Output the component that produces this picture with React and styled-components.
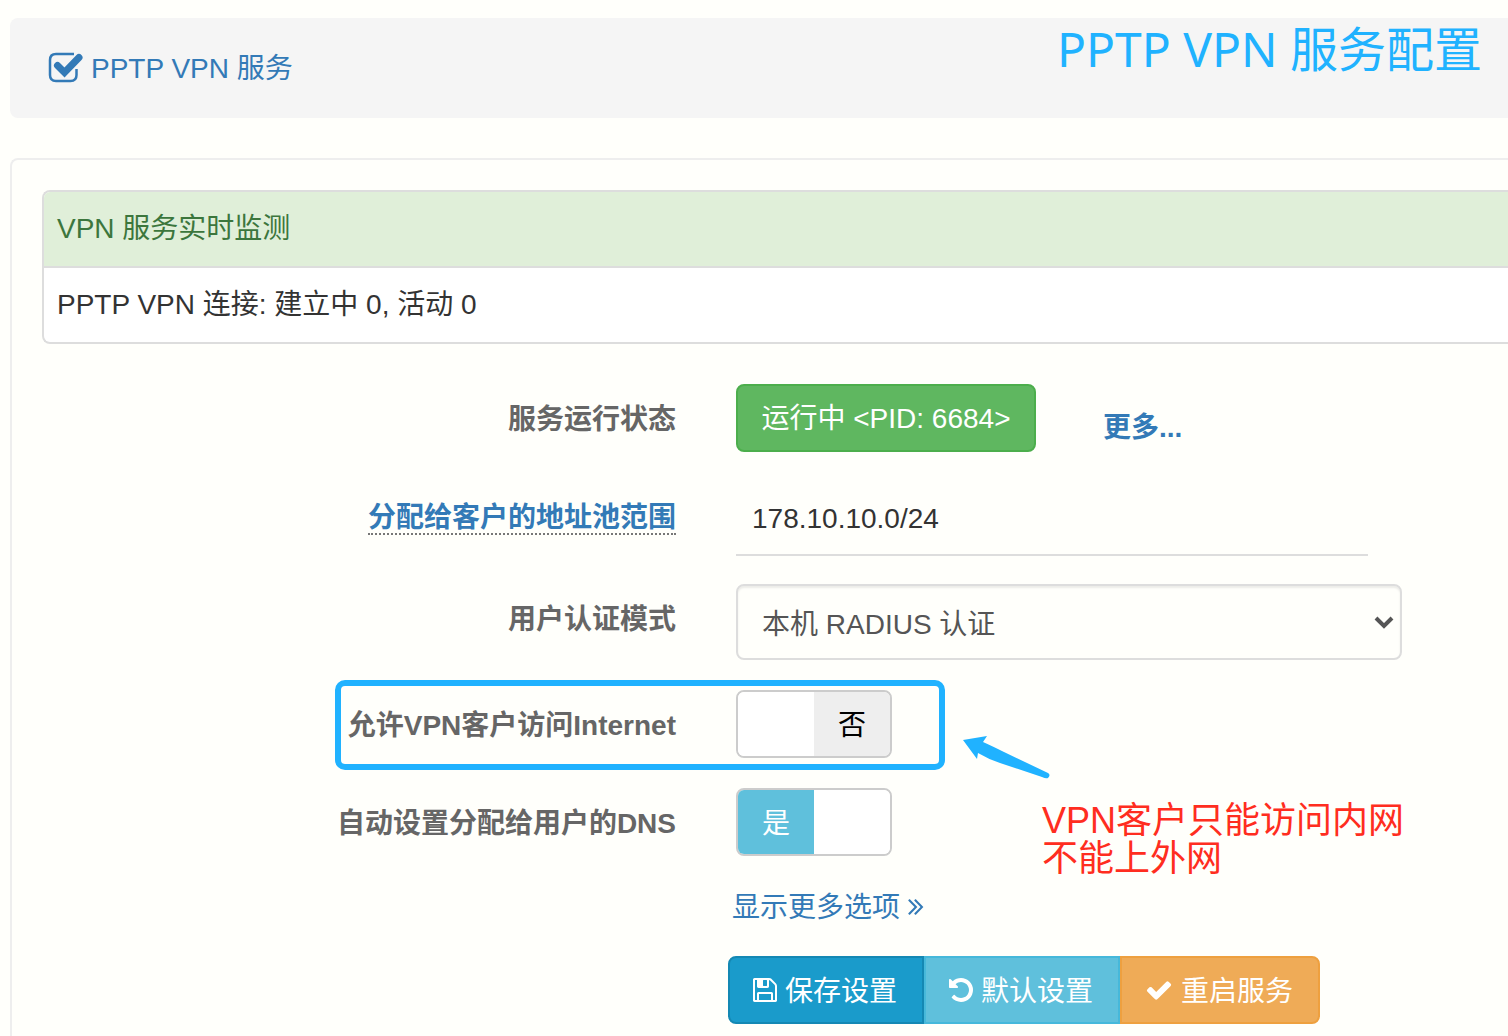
import React, { useState } from "react";
import styled, { createGlobalStyle } from "styled-components";

// Icons //
function CheckBoxIcon() {
  return (
    <svg width="36" height="32" viewBox="0 0 36 32" aria-hidden="true">
      <path
        d="M26 2H8Q2 2 2 8v15q0 6 6 6h14.500q6 0 6-6v-6"
        fill="none"
        stroke="currentColor"
        strokeWidth="2.500"
      />
      <path
        d="M9.500 13.500l7 7 14.500-15"
        fill="none"
        stroke="currentColor"
        strokeWidth="7"
        strokeLinecap="round"
      />
    </svg>
  );
}

function Icon({ path, size = 28 }) {
  return (
    <svg width={size} height={size} viewBox="0 0 1792 1792" aria-hidden="true">
      <path d={path} fill="currentColor" />
    </svg>
  );
}

const savePath =
  "M512 1536h768v-384h-768v384zm896 0h128v-896q0-14-10-38.5t-20-34.5l-281-281q-10-10-34-20t-39-10v416q0 40-28 68t-68 28h-576q-40 0-68-28t-28-68v-416h-128v1280h128v-416q0-40 28-68t68-28h832q40 0 68 28t28 68v416zm-384-928v-320q0-13-9.5-22.5t-22.5-9.5h-192q-13 0-22.5 9.5t-9.5 22.5v320q0 13 9.5 22.5t22.5 9.5h192q13 0 22.5-9.5t9.5-22.5zm640 32v928q0 40-28 68t-68 28h-1344q-40 0-68-28t-28-68v-1344q0-40 28-68t68-28h928q40 0 88 20t76 48l280 280q28 28 48 76t20 88z";
const undoPath =
  "M1664 896q0 156-61 298t-164 245-245 164-298 61q-172 0-327-72.5t-264-204.5q-7-10-6.5-22.5t8.5-20.5l137-138q10-9 25-9 16 2 23 12 73 95 179 147t225 52q104 0 198.5-40.5t163.5-109.5 109.5-163.5 40.5-198.5-40.5-198.5-109.5-163.5-163.5-109.5-198.5-40.5q-98 0-188 35.5t-160 101.5l137 138q31 30 14 69-17 40-59 40h-448q-26 0-45-19t-19-45v-448q0-42 40-59 39-17 69 14l130 129q107-101 244.5-156.5t284.5-55.5q156 0 298 61t245 164 164 245 61 298z";
const checkPath =
  "M1671 566q0 40-28 68l-724 724-136 136q-28 28-68 28t-68-28l-136-136-362-362q-28-28-28-68t28-68l136-136q28-28 68-28t68 28l294 295 656-657q28-28 68-28t68 28l136 136q28 28 28 68z";
const morePath =
  "M979 960q0 13-10 23l-466 466q-10 10-23 10t-23-10l-50-50q-10-10-10-23t10-23l393-393-393-393q-10-10-10-23t10-23l50-50q10-10 23-10t23 10l466 466q10 10 10 23zm384 0q0 13-10 23l-466 466q-10 10-23 10t-23-10l-50-50q-10-10-10-23t10-23l393-393-393-393q-10-10-10-23t10-23l50-50q10-10 23-10t23 10l466 466q10 10 10 23z";
///////////

function YesNo({ id, checked, onChange }) {
  return (
    <Switch>
      <SwitchInput
        type="checkbox"
        id={id}
        checked={checked}
        onChange={(e) => onChange(e.target.checked)}
      />
      <SwitchHalf $color="#fff" $bg={checked ? "#5fc0dc" : "#fff"}>
        {checked ? "是" : ""}
      </SwitchHalf>
      <SwitchHalf $color="#000" $bg={checked ? "#fff" : "#eee"}>
        {checked ? "" : "否"}
      </SwitchHalf>
    </Switch>
  );
}

export default function App() {
  const [pool, setPool] = useState("178.10.10.0/24");
  const [mode, setMode] = useState("radius");
  const [internet, setInternet] = useState(false);
  const [dns, setDns] = useState(true);

  return (
    <>
      <GlobalStyle />
      <Page>
        <Header>
          <TitleLink href="#vpn">
            <CheckBoxIcon />
            <TitleText>PPTP VPN 服务</TitleText>
          </TitleLink>
          <Heading>PPTP VPN 服务配置</Heading>
        </Header>

        <Content>
          <Monitor>
            <MonitorTitle>VPN 服务实时监测</MonitorTitle>
            <MonitorBody>PPTP VPN 连接: 建立中 0, 活动 0</MonitorBody>
          </Monitor>

          <Form onSubmit={(e) => e.preventDefault()}>
            <Row>
              <Label as="span">服务运行状态</Label>
              <Status type="button">运行中 &lt;PID: 6684&gt;</Status>
              <MoreLink href="#more">更多...</MoreLink>
            </Row>

            <Row $top={32}>
              <Label htmlFor="pool" $pad={14}>
                <Hint>分配给客户的地址池范围</Hint>
              </Label>
              <PoolInput id="pool" value={pool} onChange={(e) => setPool(e.target.value)} />
            </Row>

            <Row $top={28}>
              <Label htmlFor="mode">用户认证模式</Label>
              <SelectBox>
                <Select id="mode" value={mode} onChange={(e) => setMode(e.target.value)}>
                  <option value="radius">本机 RADIUS 认证</option>
                </Select>
                <Chevron width="20" height="14" viewBox="0 0 20 14" aria-hidden="true">
                  <path d="M2 2l8 8 8-8" fill="none" stroke="#555" strokeWidth="4" />
                </Chevron>
              </SelectBox>
            </Row>

            <Row $top={30}>
              <Highlight />
              <Label htmlFor="internet">允许VPN客户访问Internet</Label>
              <YesNo id="internet" checked={internet} onChange={setInternet} />
              <Note>
                <Arrow width="90" height="44" viewBox="0 0 90 44" aria-hidden="true">
                  <path
                    d="M1 4L25 0L21 6Q30 10 42 16L86 37Q89 39 86 42Q84 43 80 41L38 27Q26 23 16 17L15 23Z"
                    fill="#20b2ff"
                  />
                </Arrow>
                <NoteText>
                  <NoteLine>VPN客户只能访问内网</NoteLine>
                  <NoteLine>不能上外网</NoteLine>
                </NoteText>
              </Note>
            </Row>

            <Row $top={30}>
              <Label htmlFor="dns">自动设置分配给用户的DNS</Label>
              <YesNo id="dns" checked={dns} onChange={setDns} />
            </Row>

            <OptionsLink href="#options">
              显示更多选项
              <Icon path={morePath} />
            </OptionsLink>

            <Buttons>
              <Button type="submit" $bg="#1a9bcb" $border="#1488b3">
                <Icon path={savePath} />
                <ButtonText>保存设置</ButtonText>
              </Button>
              <Button type="button" $bg="#5fc0dc" $border="#46b8da">
                <Icon path={undoPath} />
                <ButtonText>默认设置</ButtonText>
              </Button>
              <Button type="button" $bg="#efab57" $border="#eea03f">
                <Icon path={checkPath} />
                <ButtonText>重启服务</ButtonText>
              </Button>
            </Buttons>
          </Form>
        </Content>
      </Page>
    </>
  );
}

const GlobalStyle = createGlobalStyle`
  * {
    box-sizing: border-box;
  }
  body {
    margin: 0;
    background: #fffffb;
    color: #333;
    overflow-x: hidden;
  }
  body, button, input, select {
    font-family: "Liberation Sans", "Noto Sans CJK SC", sans-serif;
    font-size: 28px;
    line-height: 40px;
  }
  svg {
    flex: none;
  }
`;

// Wrappers //
const Page = styled.main`
  padding: 18px 0 0 10px;
  min-height: 100vh;
  display: flex;
  flex-direction: column;
  gap: 40px;
`;
const Header = styled.header`
  display: flex;
  justify-content: space-between;
  align-items: flex-start;
  height: 100px;
  padding: 0 26px 0 38px;
  border-radius: 8px 0 0 8px;
  background: #f5f5f5;
`;
const Content = styled.section`
  flex: 1;
  padding: 30px 0 12px 30px;
  border: 2px solid #eee;
  border-right: 0;
  border-bottom: 0;
  border-radius: 8px 0 0 0;
`;
const Monitor = styled.section`
  border: 2px solid #ddd;
  border-right: 0;
  border-radius: 8px 0 0 8px;
  background: #fff;
  overflow: hidden;
`;
const Form = styled.form`
  padding-top: 40px;
`;
const Row = styled.div`
  position: relative;
  display: flex;
  align-items: flex-start;
  margin-top: ${(props) => props.$top || 0}px;
`;
const Buttons = styled.div`
  display: flex;
  margin: 28px 0 0 686px;
`;
//////////////

// Content //
const TitleLink = styled.a`
  display: flex;
  align-items: center;
  gap: 7px;
  height: 100px;
  color: #337ab7;
  text-decoration: none;
`;
const TitleText = styled.span`
  padding-top: 2px;
`;
const Heading = styled.h1`
  margin: 0;
  font-family: "Noto Sans", "Noto Sans CJK SC", sans-serif;
  font-size: 48px;
  font-weight: 400;
  line-height: 62px;
  color: #20b2ff;
`;
const MonitorTitle = styled.h2`
  margin: 0;
  padding: 17px 13px;
  border-bottom: 2px solid #ddd;
  background: #e0efd9;
  font-size: 28px;
  font-weight: 400;
  color: #3c763d;
`;
const MonitorBody = styled.p`
  margin: 0;
  padding: 17px 13px;
`;
const Label = styled.label`
  width: 634px;
  margin-right: 60px;
  padding-top: ${(props) => props.$pad || 16}px;
  flex: none;
  text-align: right;
  font-weight: 700;
  color: #666;
`;
const Hint = styled.span`
  border-bottom: 2px dotted #777;
  color: #337ab7;
`;
const MoreLink = styled.a`
  margin: 24px 0 0 67px;
  font-weight: 700;
  color: #337ab7;
  text-decoration: none;
`;
const OptionsLink = styled.a`
  display: inline-flex;
  align-items: center;
  margin: 32px 0 0 690px;
  color: #337ab7;
  text-decoration: none;

  svg {
    margin: 0 0 4px 2px;
  }
`;
/////////////

// Controls //
const Status = styled.button`
  width: 300px;
  height: 68px;
  padding: 2px 0 0;
  border: 2px solid #4cae4c;
  border-radius: 8px;
  background: #5fb760;
  color: #fff;
`;
const PoolInput = styled.input`
  width: 632px;
  height: 72px;
  padding: 0 16px;
  border: 0;
  border-bottom: 2px solid #ddd;
  background: transparent;
  color: #333;
`;
const SelectBox = styled.div`
  position: relative;
  width: 666px;
`;
const Select = styled.select`
  display: block;
  width: 100%;
  height: 76px;
  padding: 5px 50px 0 24px;
  appearance: none;
  border: 2px solid #ddd;
  border-radius: 8px;
  background: #fffffb;
  box-shadow: inset 0 2px 2px rgba(0, 0, 0, 0.08);
  color: #555;
`;
const Chevron = styled.svg`
  position: absolute;
  right: 8px;
  top: 32px;
  pointer-events: none;
`;
const Switch = styled.span`
  position: relative;
  display: flex;
  width: 156px;
  height: 68px;
  border: 2px solid #ccc;
  border-radius: 8px;
  overflow: hidden;
`;
const SwitchInput = styled.input`
  position: absolute;
  inset: 0;
  width: 100%;
  height: 100%;
  margin: 0;
  opacity: 0;
  cursor: pointer;
`;
const SwitchHalf = styled.span`
  flex: 1;
  line-height: 67px;
  text-align: center;
  color: ${(props) => props.$color};
  background: ${(props) => props.$bg};
`;
const Button = styled.button`
  display: flex;
  align-items: center;
  gap: 6px;
  width: 196px;
  height: 68px;
  padding: 0 0 0 21px;
  border: 2px solid ${(props) => props.$border};
  background: ${(props) => props.$bg};
  color: #fff;

  &:first-child {
    border-radius: 8px 0 0 8px;
  }
  &:last-child {
    gap: 8px;
    width: 200px;
    padding-left: 23px;
    border-radius: 0 8px 8px 0;
  }
`;
const ButtonText = styled.span`
  padding-top: 3px;
`;
//////////////

// Positioning //
const Highlight = styled.span`
  position: absolute;
  left: 293px;
  top: -10px;
  width: 610px;
  height: 90px;
  border: 6px solid #20b2ff;
  border-radius: 10px;
  pointer-events: none;
`;
const Note = styled.aside`
  position: absolute;
  left: 920px;
  top: 46px;
  color: #ff2d20;
`;
const Arrow = styled.svg`
  display: block;
`;
const NoteText = styled.p`
  margin: 22px 0 0 80px;
  font-size: 36px;
  line-height: 38px;
  white-space: nowrap;
`;
const NoteLine = styled.span`
  display: block;
`;
/////////////////
